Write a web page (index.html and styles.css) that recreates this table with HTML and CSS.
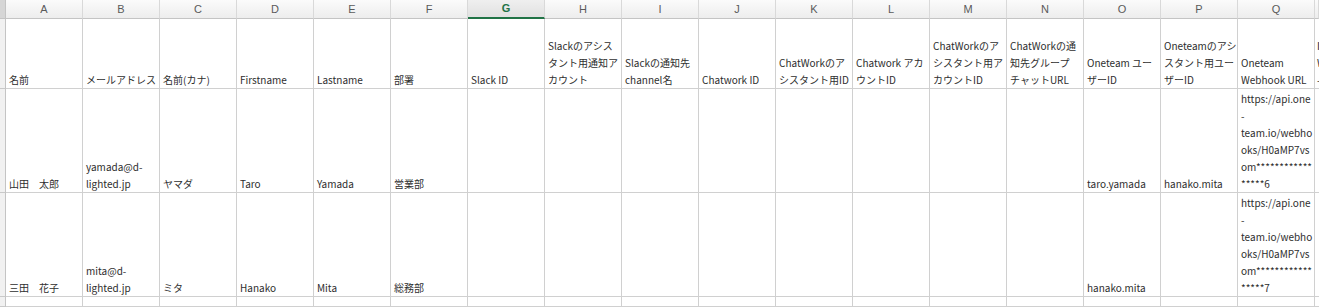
FILE: index.html
```html
<!DOCTYPE html>
<html lang="ja">
<head>
<meta charset="utf-8">
<link rel="stylesheet" href="styles.css">
</head>
<body>
<div class="sheet">
  <div class="corner"></div>
  <div class="colh">A</div><div class="colh">B</div><div class="colh">C</div><div class="colh">D</div><div class="colh">E</div><div class="colh">F</div><div class="colh sel">G</div><div class="colh">H</div><div class="colh">I</div><div class="colh">J</div><div class="colh">K</div><div class="colh">L</div><div class="colh">M</div><div class="colh">N</div><div class="colh">O</div><div class="colh">P</div><div class="colh">Q</div><div class="colh"></div>

  <div class="rowh"></div>
  <div class="cell"><span>名前</span></div>
  <div class="cell"><span>メールアドレス</span></div>
  <div class="cell"><span>名前(カナ)</span></div>
  <div class="cell"><span>Firstname</span></div>
  <div class="cell"><span>Lastname</span></div>
  <div class="cell"><span>部署</span></div>
  <div class="cell"><span>Slack ID</span></div>
  <div class="cell"><span>Slackのアシス<br>タント用通知ア<br>カウント</span></div>
  <div class="cell"><span>Slackの通知先<br>channel名</span></div>
  <div class="cell"><span>Chatwork ID</span></div>
  <div class="cell"><span>ChatWorkのア<br>シスタント用ID</span></div>
  <div class="cell"><span>Chatwork アカ<br>ウントID</span></div>
  <div class="cell"><span>ChatWorkのア<br>シスタント用ア<br>カウントID</span></div>
  <div class="cell"><span>ChatWorkの通<br>知先グループ<br>チャットURL</span></div>
  <div class="cell"><span>Oneteam ユー<br>ザーID</span></div>
  <div class="cell"><span>Oneteamのアシ<br>スタント用ユー<br>ザーID</span></div>
  <div class="cell"><span>Oneteam<br>Webhook URL</span></div>
  <div class="cell edge"><span>I<br>W<br>-</span></div>

  <div class="rowh"></div>
  <div class="cell"><span>山田　太郎</span></div>
  <div class="cell"><span>yamada@d-<br>lighted.jp</span></div>
  <div class="cell"><span>ヤマダ</span></div>
  <div class="cell"><span>Taro</span></div>
  <div class="cell"><span>Yamada</span></div>
  <div class="cell"><span>営業部</span></div>
  <div class="cell"></div>
  <div class="cell"></div>
  <div class="cell"></div>
  <div class="cell"></div>
  <div class="cell"></div>
  <div class="cell"></div>
  <div class="cell"></div>
  <div class="cell"></div>
  <div class="cell"><span>taro.yamada</span></div>
  <div class="cell"><span>hanako.mita</span></div>
  <div class="cell"><span>https://api.one<br>-<br>team.io/webho<br>oks/H0aMP7vs<br>om************<br>*****6</span></div>
  <div class="cell edge"></div>

  <div class="rowh"></div>
  <div class="cell"><span>三田　花子</span></div>
  <div class="cell"><span>mita@d-<br>lighted.jp</span></div>
  <div class="cell"><span>ミタ</span></div>
  <div class="cell"><span>Hanako</span></div>
  <div class="cell"><span>Mita</span></div>
  <div class="cell"><span>総務部</span></div>
  <div class="cell"></div>
  <div class="cell"></div>
  <div class="cell"></div>
  <div class="cell"></div>
  <div class="cell"></div>
  <div class="cell"></div>
  <div class="cell"></div>
  <div class="cell"></div>
  <div class="cell"><span>hanako.mita</span></div>
  <div class="cell"></div>
  <div class="cell"><span>https://api.one<br>-<br>team.io/webho<br>oks/H0aMP7vs<br>om************<br>*****7</span></div>
  <div class="cell edge"></div>

  <div class="rowh"></div>
  <div class="cell"></div><div class="cell"></div><div class="cell"></div><div class="cell"></div><div class="cell"></div><div class="cell"></div><div class="cell"></div><div class="cell"></div><div class="cell"></div><div class="cell"></div><div class="cell"></div><div class="cell"></div><div class="cell"></div><div class="cell"></div><div class="cell"></div><div class="cell"></div><div class="cell"></div><div class="cell edge"></div>
</div>
</body>
</html>
```

FILE: styles.css
```css
html, body {
  margin: 0;
  padding: 0;
  background: #ffffff;
  overflow: hidden;
}

.sheet {
  display: grid;
  grid-template-columns: 6px repeat(17, 77px) 4px;
  grid-template-rows: 19px 70px 104px 104px 10px;
  width: 1319px;
  height: 307px;
  overflow: hidden;
  font-family: "Noto Sans CJK JP", "Noto Sans", sans-serif;
  font-size: 10px;
  color: #2e2e2e;
}

.corner {
  background: #d6d6d6;
  border-right: 1px solid #c4c4c4;
  border-bottom: 1px solid #c4c4c4;
  box-sizing: border-box;
}

.colh {
  box-sizing: border-box;
  background: linear-gradient(#fbfbfb, #ededed);
  border-right: 1px solid #d9d9d9;
  border-bottom: 1px solid #c4c4c4;
  font-family: "Liberation Sans", "Noto Sans", sans-serif;
  font-size: 11px;
  line-height: 18px;
  text-align: center;
  color: #5a5a5a;
}

.colh.sel {
  background: linear-gradient(#efefef, #e1e1e1);
  border-bottom: 2px solid #217346;
  color: #217346;
  font-weight: bold;
  line-height: 17px;
}

.rowh {
  box-sizing: border-box;
  background: #f1f1f1;
  border-right: 1px solid #c4c4c4;
  border-bottom: 1px solid #c9c9c9;
}

.cell {
  box-sizing: border-box;
  border-right: 1px solid #d0d0d0;
  border-bottom: 1px solid #d0d0d0;
  padding: 0 2px 0 3px;
  overflow: hidden;
  display: flex;
  align-items: flex-end;
  line-height: 17px;
  white-space: nowrap;
}

.cell.edge {
  padding: 0 0 0 2px;
  border-right: 0;
}
```
